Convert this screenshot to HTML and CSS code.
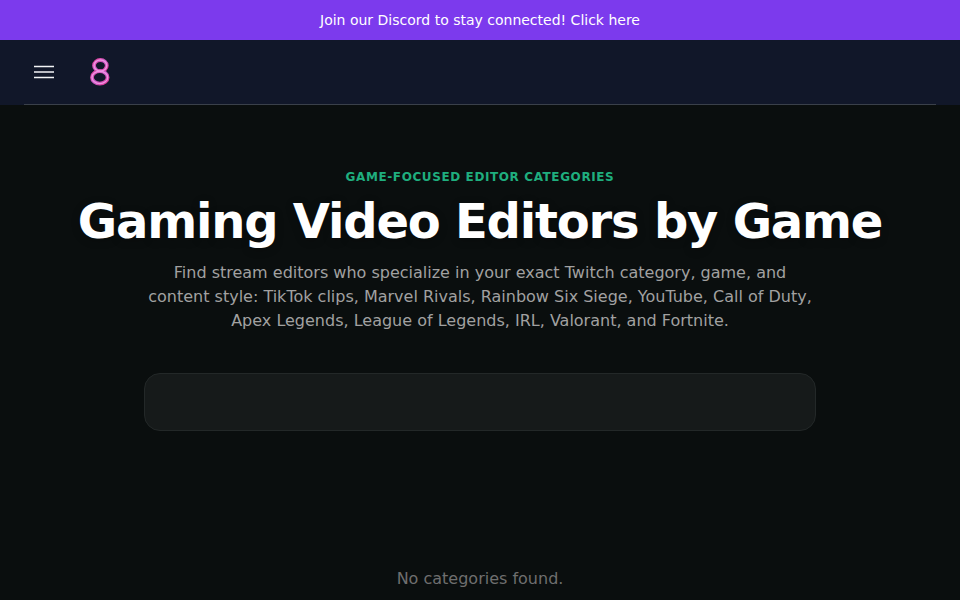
FILE: index.html
```html
<!DOCTYPE html>
<html lang="en">
<head>
    <meta charset="UTF-8">
    <meta name="viewport" content="width=device-width, initial-scale=1.0">
    <title>Gaming Video Editors by Game</title>
    <link rel="stylesheet" href="styles.css">
</head>
<body>
    <a href="#" class="announce">Join our Discord to stay connected! Click here</a>

    <header class="site-header">
        <div class="header-inner">
            <button class="menu-btn" aria-label="Menu">
                <svg width="24" height="24" viewBox="0 0 24 24" fill="none" stroke="currentColor" stroke-width="1.6">
                    <path d="M2 6.5h20M2 12h20M2 17.5h20"/>
                </svg>
            </button>
            <svg class="logo" width="24" height="32" viewBox="0 0 24 32" fill="none">
                <defs>
                    <linearGradient id="logoGrad" x1="0" y1="0" x2="1" y2="1">
                        <stop offset="0" stop-color="#e2439f"/>
                        <stop offset="0.5" stop-color="#c95cc8"/>
                        <stop offset="1" stop-color="#e03a96"/>
                    </linearGradient>
                </defs>
                <ellipse cx="12.4" cy="9.6" rx="6.4" ry="5.6" stroke="url(#logoGrad)" stroke-width="3.8"/>
                <ellipse cx="11.8" cy="21.4" rx="7.8" ry="6.2" stroke="url(#logoGrad)" stroke-width="3.8"/>
                <ellipse cx="12.4" cy="9.6" rx="6.4" ry="5.6" stroke="#ee92e4" stroke-width="1.4"/>
                <ellipse cx="11.8" cy="21.4" rx="7.8" ry="6.2" stroke="#ee92e4" stroke-width="1.4"/>
            </svg>
        </div>
    </header>

    <main class="hero">
        <p class="eyebrow">GAME-FOCUSED EDITOR CATEGORIES</p>
        <h1 class="title">Gaming Video Editors by Game</h1>
        <p class="intro">Find stream editors who specialize in your exact Twitch category, game, and content style: TikTok clips, Marvel Rivals, Rainbow Six Siege, YouTube, Call of Duty, Apex Legends, League of Legends, IRL, Valorant, and Fortnite.</p>
        <div class="search-box"></div>
        <p class="empty">No categories found.</p>
    </main>
</body>
</html>
```

FILE: styles.css
```css
* {
    margin: 0;
    padding: 0;
    box-sizing: border-box;
}

body {
    font-family: "DejaVu Sans", sans-serif;
    background-color: #0a0e0e;
    color: #fff;
    min-height: 100vh;
}

.announce {
    display: block;
    height: 40px;
    line-height: 40px;
    background-color: #7c3aed;
    color: #fff;
    text-align: center;
    font-size: 14px;
    text-decoration: none;
}

.site-header {
    height: 65px;
    padding: 0 24px;
    background-color: #111729;
}

.header-inner {
    height: 65px;
    display: flex;
    align-items: center;
    gap: 32px;
    padding: 0 8px;
    border-bottom: 1px solid #3a404a;
}

.menu-btn {
    display: flex;
    background: none;
    border: none;
    color: #f3f4f6;
    cursor: pointer;
}

.hero {
    padding: 64px 16px 0;
    text-align: center;
}

.eyebrow {
    font-size: 12px;
    font-weight: bold;
    letter-spacing: 0.6px;
    line-height: 16px;
    color: #1fae7e;
    margin-bottom: 8px;
}

.title {
    font-size: 48px;
    line-height: 56px;
    font-weight: bold;
    letter-spacing: -1.2px;
    text-shadow: 0 2px 8px rgba(0, 0, 0, 0.25);
    margin-bottom: 12px;
}

.intro {
    max-width: 672px;
    margin: 0 auto 40px;
    font-size: 16px;
    line-height: 24px;
    color: #a1a1a1;
}

.search-box {
    max-width: 672px;
    height: 58px;
    margin: 0 auto;
    background-color: #161a1a;
    border: 1px solid #232828;
    border-radius: 16px;
}

.empty {
    margin-top: 136px;
    font-size: 16px;
    line-height: 24px;
    color: #6f6f6f;
}
```
